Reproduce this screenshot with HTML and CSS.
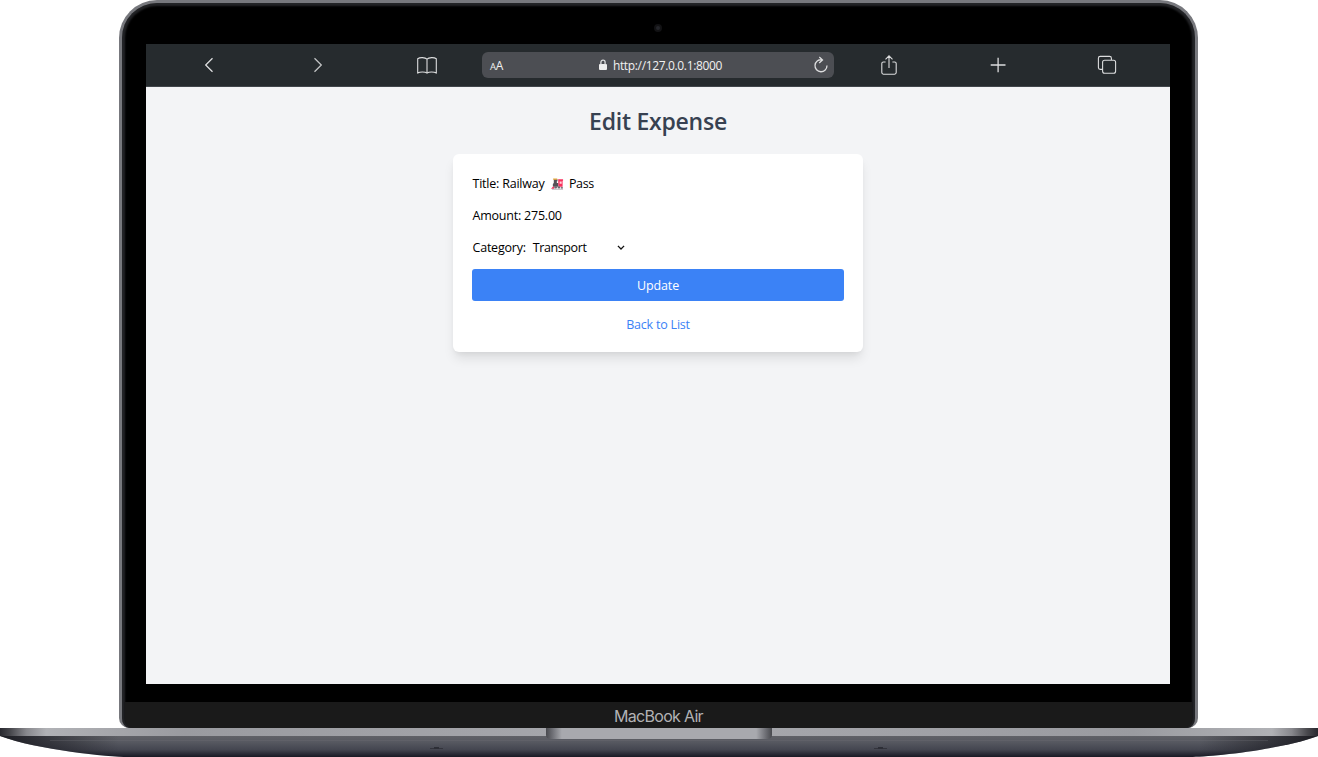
FILE: index.html
```html
<!DOCTYPE html>
<html lang="en">
<head>
<meta charset="utf-8">
<title>Edit Expense</title>
<link rel="stylesheet" href="styles.css">
</head>
<body>
<div class="laptop">
  <div class="lid">
    <div class="bezel">
      <div class="camera-row"><span class="camera"></span></div>
      <div class="screen">
        <nav class="toolbar">
          <span class="tool"><svg width="24" height="24" viewBox="0 0 24 24"><path d="M15.5 5.2 8.7 12l6.8 6.8"/></svg></span>
          <span class="tool dim"><svg width="24" height="24" viewBox="0 0 24 24"><path d="M8.5 5.2l6.8 6.8-6.8 6.8"/></svg></span>
          <span class="tool"><svg width="24" height="24" viewBox="0 0 24 24"><path class="thin" d="M12 6.2C10 4.2 5 4.1 2.7 5.7v14.2C5 18.6 10 18.6 12 20.1 14 18.6 19 18.6 21.3 19.9V5.7C19 4.1 14 4.2 12 6.2v13.9"/></svg></span>
          <div class="address">
            <span class="aa"><small>A</small>A</span>
            <span class="url"><svg width="8" height="12" viewBox="0 0 8 12"><rect x="0" y="5" width="8" height="6" rx="1" fill="#eee" stroke="none"/><path d="M1.9 5.5V3.3a2.1 2.1 0 0 1 4.2 0v2.2"/></svg><span class="url-text">http://127.0.0.1:8000</span></span>
            <svg class="reload" width="16" height="18" viewBox="0 0 16 18"><path d="M14 9.6A6 6 0 1 1 8.8 3.8M6.3 1l3.2 3-3.3 3"/></svg>
          </div>
          <span class="tool"><svg width="24" height="24" viewBox="0 0 24 24"><path class="thin" d="M8.6 9H6.4Q4.8 9 4.8 10.6v9q0 1.6 1.6 1.6h11.2q1.6 0 1.6-1.6v-9Q19.2 9 17.6 9h-2.2M12 15V3.2M8.5 6.4 12 2.9l3.5 3.5"/></svg></span>
          <span class="tool"><svg width="24" height="24" viewBox="0 0 24 24"><path d="M4.7 12h14.8M12.1 4.8v14.4"/></svg></span>
          <span class="tool"><svg width="24" height="24" viewBox="0 0 24 24"><path class="thin" d="M7.6 16.4H5.2q-1.8 0-1.8-1.8V5.2q0-1.8 1.8-1.8h9.4q1.8 0 1.8 1.8v1.9"/><rect class="thin" x="7.6" y="7.2" width="13" height="13" rx="2"/></svg></span>
        </nav>
        <main class="page">
          <h1>Edit Expense</h1>
          <form class="card">
            <div class="field"><span class="title-text">Title: Railway</span><svg class="train" width="13" height="12" viewBox="0 0 14 12"><path fill="#555158" d="M3 1h4v2h-.7v2H8v4H2V6l1-1z"/><path fill="#e6a83a" d="M2.3 0h4.4v1.4H2.3z"/><path fill="#f8315d" d="M7.7 1H13v1.6h-.5V9H8zM0 11l2-2h1.5v2z"/><path fill="#ffd5dd" d="M9.3 3.4h2.2v2.2H9.3z"/><path fill="#9b969e" d="M1 11h12v1H1z"/><circle cx="5" cy="9.6" r="1.3" fill="#6d6972"/><circle cx="8.6" cy="9.6" r="1.3" fill="#6d6972"/><circle cx="11.8" cy="10" r="1" fill="#6d6972"/></svg><span class="pass">Pass</span></div>
            <div class="field"><span class="amount">Amount: 275.00</span></div>
            <div class="field"><span class="label">Category:</span><span class="select"><span class="value">Transport</span><svg width="8" height="6" viewBox="0 0 8 6"><path d="M.9 .9 4 4l3.1-3.1"/></svg></span></div>
            <button class="update" type="button">Update</button>
            <a class="back">Back to List</a>
          </form>
        </main>
      </div>
    </div>
    <div class="chin">MacBook Air</div>
  </div>
  <svg class="base" width="1318" height="29" viewBox="0 0 1318 29">
    <defs>
      <linearGradient id="body" x1="0" y1="0" x2="0" y2="1"><stop offset="0" stop-color="#606167"/><stop offset=".3" stop-color="#565860"/><stop offset=".65" stop-color="#444650"/><stop offset="1" stop-color="#181924"/></linearGradient>
      <linearGradient id="deck"><stop offset="0" stop-color="#28282e"/><stop offset=".008" stop-color="#48484d"/><stop offset=".02" stop-color="#88888d"/><stop offset=".035" stop-color="#b0b1b5"/><stop offset=".14" stop-color="#9a9ba0"/><stop offset=".5" stop-color="#a8a9ae"/><stop offset=".86" stop-color="#9a9ba0"/><stop offset=".965" stop-color="#b0b1b5"/><stop offset=".98" stop-color="#88888d"/><stop offset=".992" stop-color="#48484d"/><stop offset="1" stop-color="#28282e"/></linearGradient>
      <linearGradient id="notch"><stop offset="0" stop-color="#48494e"/><stop offset=".03" stop-color="#707177"/><stop offset=".07" stop-color="#a8a9ae"/><stop offset=".93" stop-color="#a8a9ae"/><stop offset=".97" stop-color="#707177"/><stop offset="1" stop-color="#48494e"/></linearGradient>
      <linearGradient id="edge"><stop offset="0" stop-color="#15151b" stop-opacity=".9"/><stop offset=".09" stop-color="#15151b" stop-opacity="0"/><stop offset=".91" stop-color="#15151b" stop-opacity="0"/><stop offset="1" stop-color="#15151b" stop-opacity=".9"/></linearGradient>
      <clipPath id="hull"><path d="M0 0H1318V8C1280 22 1210 29 1190 29H128C108 29 38 22 0 8Z"/></clipPath>
    </defs>
    <g clip-path="url(#hull)">
      <path fill="url(#body)" d="M0 8H1318V29H0z"/>
      <path fill="url(#edge)" d="M0 8H1318V29H0z"/>
      <path fill="url(#deck)" d="M0 0H1318V8H0z"/>
      <path fill="#6f7077" opacity=".3" d="M50 12H1268v1H50z"/>
    </g>
    <path fill="url(#notch)" d="M546 0H772V7q0 4-5 4H551q-5 0-5-4z"/>
    <path stroke="#33343c" stroke-width="1" fill="none" d="M430 20.5h13M874 20.5h13"/>
    <path stroke="#22232a" stroke-width="1" fill="none" d="M434 19.8h5M878 19.8h5"/>
  </svg>
</div>
</body>
</html>
```
FILE: styles.css
```css
* { box-sizing: border-box; }
body {
  margin: 0;
  background: #fff;
  font-family: "Open Sans", "Noto Sans", sans-serif;
  font-size: 12.5px;
  overflow: hidden;
}
.laptop { width: 1318px; height: 757px; display: flex; flex-direction: column; align-items: center; }
.lid {
  width: 1079px;
  height: 728px;
  margin-right: 1px;
  flex: none;
  background: #000;
  border-radius: 38px 38px 10px 10px;
  border: 3px solid #77787d;
  border-bottom: 0;
  box-shadow: inset 0 0 2px 3px #222326;
  display: flex;
  flex-direction: column;
  overflow: hidden;
}
.bezel { height: 699px; padding: 0 25px 0 24px; }
.camera-row { height: 41px; display: flex; justify-content: center; padding-top: 21px; }
.camera { width: 8px; height: 8px; border-radius: 50%; background: #24252a; border: 2px solid #121214; }
.screen { width: 1024px; height: 640px; background: #f3f4f6; }
.toolbar {
  height: 43px;
  padding: 0 8.5px;
  background: #262b2e;
  border-bottom: 1px solid #41464b;
  display: grid;
  grid-template-columns: repeat(3, 109.17px) 352px repeat(3, 109.17px);
  align-items: center;
}
.toolbar svg { fill: none; stroke: #dcddde; stroke-width: 1.3; display: block; }
.toolbar .thin { stroke-width: 1.1; }
.tool { display: flex; justify-content: center; }
.toolbar .dim svg { stroke: #c1c3c4; }
.address {
  height: 26px;
  border-radius: 6px;
  background: #4c4e53;
  color: #f1f1f1;
  display: grid;
  grid-template-columns: 40px 1fr 40px;
  align-items: center;
  padding: 0 5px 0 8px;
}
.aa { font-size: 12px; letter-spacing: -.2px; }
.aa small { font-size: 9.5px; }
.url { display: flex; justify-content: center; align-items: center; gap: 6px; padding-left: 2px; }
.url-text { font-size: 12px; letter-spacing: -.35px; }
.reload { justify-self: end; }
.page { padding-top: 18px; display: flex; flex-direction: column; align-items: center; }
h1 { margin: 0; font-size: 23px; line-height: 32px; font-weight: 600; color: #374151; letter-spacing: -.25px; }
.card {
  width: 410px;
  height: 198px;
  margin-top: 17px;
  padding: 19.5px 19px;
  border-radius: 6px;
  background: #fff;
  box-shadow: 0 8px 12px -2px rgba(0,0,0,.1), 0 3px 5px -2px rgba(0,0,0,.06);
  color: #000;
}
.field { height: 20px; margin-bottom: 12px; padding-left: .5px; display: flex; align-items: center; letter-spacing: -.22px; line-height: 20px; }
.train { margin: 0 5.5px 0 6px; }
.pass { letter-spacing: -.4px; }
.select { display: flex; align-items: center; justify-content: space-between; width: 92px; margin-left: 7px; }
.value { letter-spacing: -.4px; }
.select svg { fill: none; stroke: #111; stroke-width: 1.3; }
.update {
  display: block;
  width: 100%;
  height: 32px;
  margin-top: -.6px;
  padding: 1.5px 0 0;
  border: 0;
  border-radius: 3px;
  background: #3b82f6;
  color: #fff;
  font: inherit;
  letter-spacing: -.1px;
}
.back { display: block; margin-top: 13.6px; line-height: 20px; text-align: center; color: #3b82f6; letter-spacing: -.2px; }
.chin {
  height: 26px;
  margin: 0 3px;
  border-radius: 0 0 8px 8px;
  background: #1a1a1a;
  color: #b2b2b5;
  font: 16px/28px Inter, sans-serif;
  letter-spacing: -.7px;
  text-align: center;
}
.base { display: block; flex: none; }
```
